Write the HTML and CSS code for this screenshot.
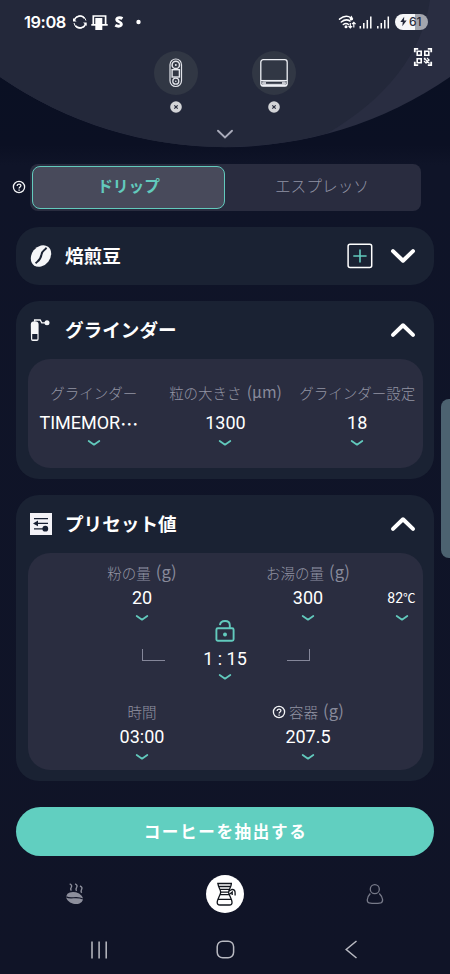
FILE: index.html
```html
<!DOCTYPE html>
<html lang="ja">
<head>
<meta charset="utf-8">
<title>ドリップ</title>
<link rel="stylesheet" href="styles.css">
</head>
<body>
<svg class="defs" width="0" height="0">
  <symbol id="chev" viewBox="0 0 14 8"><path d="M1.7 2 L7 5.7 L12.3 2" fill="none" stroke="#62cabd" stroke-width="1.8" stroke-linecap="round" stroke-linejoin="round"/></symbol>
  <symbol id="help" viewBox="0 0 14 14"><circle cx="7" cy="7" r="5.6" fill="none" stroke="#f3f4f6" stroke-width="1.3"/><path d="M5.1 5.9 C5.1 3.5 8.9 3.5 8.9 5.6 C8.9 7 7.1 7 7.1 8.4 M7.1 9.4 V10.7" fill="none" stroke="#f3f4f6" stroke-width="1.3"/></symbol>
  <symbol id="close" viewBox="0 0 12 12"><circle cx="6" cy="6" r="5.8" fill="#d3d4d7"/><path d="M4.3 4.3 L7.7 7.7 M7.7 4.3 L4.3 7.7" stroke="#282c3c" stroke-width="1.2"/></symbol>
  <symbol id="up" viewBox="0 0 26 16"><path d="M3 12.9 L13 3.3 L23 12.9" fill="none" stroke="#fff" stroke-width="4" stroke-linecap="round" stroke-linejoin="round"/></symbol>
</svg>
<header class="hero">
  <svg class="hero-bg" viewBox="0 0 450 150">
    <path d="M0 0 H450 V77 A396 396 0 0 1 0 77 Z" fill="#292d41"/>
    <path d="M0 0 H430 C422 54 386 99 327 133.5 A396 396 0 0 1 0 77 Z" fill="#23283a"/>
  </svg>
  <div class="status">
    <span class="clock">19:08</span>
    <svg width="76" height="18" viewBox="72 13 76 18">
      <g fill="none" stroke="#fff" stroke-width="1.6"><path d="M74.3 20 A6 6 0 0 1 84.5 18.2 M85.6 24 A6 6 0 0 1 75.5 25.9"/><path d="M76 17.5 A6 6 0 0 1 85.9 20.5 M84 26.6 A6 6 0 0 1 74 23" stroke-width="1"/></g>
      <path d="M73 18 v3.6 h3.6z M86.7 26 v-3.6 h-3.6z" fill="#fff"/>
      <path d="M93.3 24.8 V16 H105.6 V24.8 M91.3 24.9 H107.7" fill="none" stroke="#fff" stroke-width="1.7"/>
      <path d="M95.3 18 h7 v12 h-7z" fill="#fff"/>
      <path d="M122.5 18.6 C119.5 16.9 116.4 18 116.8 20 C117.1 21.9 121.4 21.7 121.4 24.1 C121.4 26.5 117.8 26.8 115.3 25.3" fill="none" stroke="#fff" stroke-width="2.9"/>
      <circle cx="138.5" cy="22" r="2.2" fill="#fff"/>
    </svg>
    <svg class="signals" width="52" height="18" viewBox="338 12 52 18">
      <g fill="none" stroke="#fff" stroke-width="1.5" stroke-linecap="round"><path d="M339.5 18.2 Q345.5 13.3 351 16.8 M341.3 21 Q345.8 17.3 350 20 M343.3 23.5 Q346 21.5 348.5 23.5"/></g>
      <circle cx="346" cy="25.8" r="1.5" fill="#fff"/><path d="M351.4 14.6 l1.8 3.2 a1.8 1.8 0 1 1-3.6 0z" fill="#fff"/>
      <path d="M350.3 22 v5 m-1.8-1.8 l1.8 1.8 1.8-1.8 M353.8 26.4 v-5 m-1.8 1.8 l1.8-1.8 1.8 1.8" fill="none" stroke="#fff" stroke-width="1.2"/>
      <path d="M360.3 25 V27.5 M363.8 22 V27.5 M367.3 19 V27.5 M377.8 25 V27.5 M381.3 22 V27.5 M384.8 19 V27.5" stroke="#fff" stroke-width="1.5"/>
      <path d="M370.8 15.5 V27.5 M388.3 15.5 V27.5" stroke="#fff" stroke-width="1.5"/>
    </svg>
    <div class="battery">
      <svg width="7" height="11" viewBox="0 0 8 11"><path d="M4.8 0 L0.4 6 H3.2 L2.6 11 L7.6 4.3 H4.6z" fill="#23283a"/></svg><span>61</span>
    </div>
  </div>
  <svg class="qr" width="20" height="20" viewBox="0 0 20 20" fill="none" stroke="#fff">
    <path d="M1.8 5.2 V1.8 H5.2 M14.8 1.8 H18.2 V5.2 M1.8 14.8 V18.2 H5.2 M14.8 18.2 H18.2 V14.8" stroke-width="1.8"/>
    <path d="M4.2 4.2 h4 v4 h-4z M11.8 4.2 h4 v4 h-4z M4.2 11.8 h4 v4 h-4z" stroke-width="1.6"/>
    <path d="M11 11 l5.5 5.5 M14 11 l2.5 2.5 M11 14 l2.5 2.5 M11 12.5 l1.5-1.5 M13 15.5 l3.2-3.2" stroke-width="1.1"/>
  </svg>
  <div class="devices">
    <div class="device">
      <div class="disc"><svg width="16" height="30" viewBox="0 0 16 30" fill="none" stroke="#e2e4ea" stroke-width="1.2"><rect x="2" y="1" width="11.5" height="27.5" rx="5.7"/><circle cx="7.8" cy="6.9" r="3.7" stroke-width="1.5"/><circle cx="7.8" cy="6.9" r="1" fill="#e2e4ea" stroke="none"/><rect x="4.1" y="11.7" width="7.3" height="7.3" stroke-width="1.4"/><circle cx="7.8" cy="23.2" r="3" stroke-width="1.3"/><circle cx="7.8" cy="23.2" r=".8" fill="#e2e4ea" stroke="none"/></svg></div>
      <svg width="12" height="12"><use href="#close"/></svg>
    </div>
    <div class="device">
      <div class="disc"><svg width="30" height="30" viewBox="0 0 30 30" fill="none" stroke="#eef0f5"><rect x="1.8" y="1.7" width="26.4" height="26.4" rx="2.5" stroke-width="1.3"/><path d="M2 22.5 H28" stroke-width="1.1"/><path d="M2 27.3 H28" stroke-width="1.8"/><rect x="3.3" y="23.3" width="23.4" height="3" rx="1.4" stroke-width=".8"/><path d="M4 25 h3 M23 25 h3" stroke-width="1.5"/></svg></div>
      <svg width="12" height="12"><use href="#close"/></svg>
    </div>
  </div>
  <svg class="pull" width="18" height="10" viewBox="0 0 18 10"><path d="M2 1.7 L9 8.5 L16 1.7" fill="none" stroke="#a9abba" stroke-width="1.9" stroke-linecap="round"/></svg>
</header>

<main>
  <div class="modes">
    <svg class="modes-help" width="14" height="14"><use href="#help"/></svg>
    <div class="tabs"><div class="tab active">ドリップ</div><div class="tab">エスプレッソ</div></div>
  </div>

  <section class="card">
    <div class="card-head">
      <svg class="head-icon" width="24" height="24" viewBox="0 0 24 24"><g transform="rotate(38 12 12)"><ellipse cx="12" cy="12" rx="9.2" ry="11.6" fill="#f5f6f8"/></g><path d="M17.4 3.6 C16.2 6.5 13.3 5.8 12.5 10.5 C11.8 15.6 9.3 16.7 6.6 19.4" fill="none" stroke="#1a2233" stroke-width="1.9"/></svg>
      <h2>焙煎豆</h2>
      <svg class="add" width="26" height="26" viewBox="0 0 26 26"><rect x="1.1" y="1.2" width="23.6" height="23.4" rx="2" fill="none" stroke="#fff" stroke-width="1.5"/><path d="M13 6.4 V19.6 M6.3 13 H19.6" stroke="#62cabd" stroke-width="1.6"/></svg>
      <svg class="fold down" width="26" height="16"><use href="#up"/></svg>
    </div>
  </section>

  <section class="card">
    <div class="card-head">
      <svg class="head-icon" width="24" height="24" viewBox="0 0 24 24"><path d="M1.8 6.2 Q1.8 3.3 5.8 3.3 Q9.6 3.3 9.6 6.2 V21 Q9.6 22.9 7.8 22.9 H3.8 Q2 22.9 2 21z" fill="#f5f6f8"/><path d="M3.2 16 h5.2 v5.4 h-5.2z" fill="#182033"/><path d="M5.6 3.5 V2 H11.2 L12.8 4.8 H19" fill="none" stroke="#f5f6f8" stroke-width="1.3"/><circle cx="18" cy="4.8" r="2.5" fill="#f5f6f8"/></svg>
      <h2>グラインダー</h2>
      <svg class="fold" width="26" height="16"><use href="#up"/></svg>
    </div>
    <div class="panel grinder">
      <div class="field"><span class="label">グラインダー</span><span class="value model">TIMEMOR<span class="dots">⋯</span></span><svg class="chev"><use href="#chev"/></svg></div>
      <div class="field"><span class="label">粒の大きさ <span class="unit">(μm)</span></span><span class="value">1300</span><svg class="chev"><use href="#chev"/></svg></div>
      <div class="field"><span class="label">グラインダー設定</span><span class="value">18</span><svg class="chev"><use href="#chev"/></svg></div>
    </div>
  </section>

  <section class="card">
    <div class="card-head">
      <svg class="head-icon" width="24" height="24" viewBox="0 0 24 24"><path d="M1 1 h22 v22 h-22z" fill="#f3f2f7"/><path d="M5 6.6 H19 M9 11.4 H19 M5 16.9 H14" stroke="#182033" stroke-width="1.3"/><path d="M4 11.4 L9 8.6 V14.2z" fill="#182033"/><circle cx="16.3" cy="16.7" r="2.9" fill="#182033"/></svg>
      <h2>プリセット値</h2>
      <svg class="fold" width="26" height="16"><use href="#up"/></svg>
    </div>
    <div class="panel preset">
      <div class="field c1"><span class="label">粉の量 <span class="unit">(g)</span></span><span class="value">20</span><svg class="chev"><use href="#chev"/></svg></div>
      <div class="field c3"><span class="label">お湯の量 <span class="unit">(g)</span></span><span class="value">300</span><svg class="chev"><use href="#chev"/></svg></div>
      <div class="field c5"><span class="label"></span><span class="value temp">82<span class="deg">℃</span></span><svg class="chev"><use href="#chev"/></svg></div>
      <div class="bracket c1 r2 left"></div>
      <div class="ratio c2 r2">
        <svg width="20" height="22" viewBox="0 0 20 22"><rect x="1.4" y="8.3" width="17.2" height="12.5" rx="1.5" fill="none" stroke="#62cabd" stroke-width="1.9"/><path d="M4.9 5.2 C5.6 -.2 14.6 -.5 14.8 5.2 V8" fill="none" stroke="#62cabd" stroke-width="1.9"/><circle cx="10" cy="14.5" r="2" fill="#62cabd"/></svg>
        <span class="value">1 : 15</span><svg class="chev"><use href="#chev"/></svg>
      </div>
      <div class="bracket c3 r2 right"></div>
      <div class="field c1 r3"><span class="label">時間</span><span class="value">03:00</span><svg class="chev"><use href="#chev"/></svg></div>
      <div class="field c3 r3"><span class="label"><svg class="label-help" width="14" height="14"><use href="#help"/></svg>容器 <span class="unit">(g)</span></span><span class="value">207.5</span><svg class="chev"><use href="#chev"/></svg></div>
    </div>
  </section>

  <button class="brew">コーヒーを抽出する</button>
</main>

<nav class="app-nav">
  <div><svg width="20" height="24" viewBox="0 0 20 24"><ellipse cx="9.6" cy="16" rx="8.5" ry="5.8" transform="rotate(14 9.6 16)" fill="#8d8f9c"/><path d="M1.2 14.7 C6 18 11 13.3 18 17.1" fill="none" stroke="#101427" stroke-width="1.1"/><path d="M4.7 1.8 q3 1.3 1.4 3.8 q-1 1.4 .2 3 M10.1 1.8 q3 1.3 1.4 3.8 q-1 1.4 0 3.2 M15 4 q3 1.3 1.4 3.8 q-.8 1.2 .2 3" fill="none" stroke="#8d8f9c" stroke-width="1.4"/></svg></div>
  <div><span class="nav-disc"><svg width="38" height="38" viewBox="0 0 38 38" fill="none" stroke="#11151c" stroke-width="1.3"><path d="M11.2 8.5 H26 M12 8.5 C12 13 15.5 15 14.6 18 C13.5 21.5 11.5 24 11.2 27 Q11 30 14 30 H23.4 Q26.3 30 26 27 C25.8 24 23.7 21.5 22.7 18 C22 15 25.2 13 25.4 8.5 M12.5 11.5 H25 M13.5 14.3 H24 M14.4 17.2 H23 M13.6 19.6 H23.5 M12 24.3 H25.3"/><path d="M23 16 L26 14.5 Q29.2 14.3 29.1 18 V20.5 M23.5 19.2 L26.2 17.1 V20"/></svg></span></div>
  <div><svg width="18" height="22" viewBox="0 0 18 22" fill="none" stroke="#777a89" stroke-width="1.3"><circle cx="8.8" cy="6.2" r="4.5"/><path d="M4.3 10.5 C0 15.2 1 19.4 3 19.8 Q9 21 14.8 19.8 C17.3 19 17.5 14.8 13.3 10.5"/></svg></div>
</nav>
<footer class="sys-nav">
  <svg width="20" height="20" viewBox="0 0 20 20"><path d="M2 1.5 V18.5 M9.1 1.5 V18.5 M16.2 1.5 V18.5" stroke="#b9bac2" stroke-width="1.5"/></svg>
  <svg width="20" height="20" viewBox="0 0 20 20"><rect x="1.2" y="1.2" width="16.4" height="16.6" rx="5.5" fill="none" stroke="#b9bac2" stroke-width="1.5"/></svg>
  <svg width="20" height="20" viewBox="0 0 20 20"><path d="M15.5 1 L5.2 9.5 L15.5 18" fill="none" stroke="#b9bac2" stroke-width="1.5"/></svg>
</footer>
<div class="edge-handle"></div>
</body>
</html>
```

FILE: styles.css
```css
* { box-sizing: border-box; }
body {
  margin: 0;
  width: 450px;
  height: 974px;
  overflow: hidden;
  position: relative;
  background: linear-gradient(#091023 0, #0b1023 145px, #0f1428 165px, #101427 100%);
  color: #fff;
  font-family: "Noto Sans CJK JP", sans-serif;
}
svg { display: block; flex: none; }
.defs { position: absolute; }

.hero { position: relative; height: 148px; display: flex; flex-direction: column; }
.hero-bg { position: absolute; inset: 0; width: 450px; height: 150px; }
.hero > * { z-index: 1; }
.hero > .hero-bg { z-index: 0; }
.status { display: flex; align-items: center; height: 43px; padding: 0 22px 0 24px; }
.clock { width: 48px; font: 600 16.4px/20px Inter, sans-serif; letter-spacing: -.4px; }
.status .signals { margin-left: auto; margin-right: 5px; }
.battery {
  display: flex; align-items: center; gap: 2px; width: 33px; height: 16px; padding-left: 5px;
  border-radius: 8px; background: linear-gradient(90deg, #f5f6f8 61%, #a3a5ad 61%);
  color: #292d3d; font: 500 12px/16px Inter, sans-serif; letter-spacing: -.1px;
}
.qr { position: absolute; top: 47px; left: 413px; }
.devices { display: flex; justify-content: center; gap: 54px; margin-top: 8px; }
.device { width: 44px; display: flex; flex-direction: column; align-items: center; gap: 6px; }
.disc { width: 44px; height: 44px; border-radius: 50%; background: #313744; display: flex; align-items: center; justify-content: center; }
.pull { margin: 16px auto 0; }

main { padding: 16px 16px 0; }
.modes { display: flex; align-items: center; gap: 4px; margin-left: -4px; height: 47px; }
.modes-help { margin-bottom: 1px; }
.tabs { flex: none; width: 391px; height: 47px; padding: 2px; border-radius: 8px; background: #292c3f; display: flex; }
.tab { flex: 1; height: 43px; line-height: 39px; text-align: center; font-size: 15.7px; font-weight: 300; color: #9092a4; }
.tab.active { flex: none; width: 193px; line-height: 37px; background: #484a5b; border: 1px solid #62cabd; border-radius: 8px; font-weight: 700; color: #62cabd; }

.card { margin-top: 16px; padding: 0 11px 11px 12px; border-radius: 23px; background: #1a2233; }
.modes + .card { padding-bottom: 0; }
.card-head { height: 58px; display: flex; align-items: center; padding-right: 7px; }
.head-icon { margin-left: 1px; margin-right: 12px; }
h2 { margin: 0; padding-bottom: 2px; font-size: 18.6px; line-height: 28px; font-weight: 700; }
.fold { margin-left: auto; }
.add + .fold { margin-left: 17px; }
.add { margin-left: auto; }
.down { transform: rotate(180deg); }
.panel { border-radius: 22px; background: #2a2d40; display: grid; }
.field, .ratio { display: flex; flex-direction: column; align-items: center; white-space: nowrap; }
.label { flex: none; display: flex; align-items: center; gap: 5px; height: 20px; font-size: 14.5px; line-height: 20px; font-weight: 300; color: #9294a3; }
.unit { font-size: 16.6px; font-weight: 400; color: #888a9b; position: relative; top: -2px; }
.grinder .unit { font-size: 15.8px; top: -1px; }
.label-help { margin-right: -2px; }
.value { flex: none; height: 24px; margin-top: 2px; font: 450 18px/24px Roboto, "Noto Sans CJK JP", sans-serif; }
.model { display: flex; margin-right: 10px; }
.dots { font-family: "Noto Sans CJK JP", sans-serif; }
.chev { width: 14px; height: 8px; margin-top: 4px; }

.grinder { height: 109px; padding-top: 24px; grid-template-columns: repeat(3, 1fr); }
.grinder .value { margin-top: 8px; }
.preset { height: 217px; padding: 10px 0 0 72.5px; grid-template-columns: 83px 83px 83px 30px 44px; grid-template-rows: 56px 83px 1fr; }
.preset .field .value { margin-top: 3px; }
.preset .field { margin-left: -1px; margin-right: -1px; }
.c1 { grid-column: 1; }
.c2 { grid-column: 2; }
.c3 { grid-column: 3; }
.c5 { grid-column: 5; }
.r2 { grid-row: 2; }
.r3 { grid-row: 3; }
.temp { display: flex; font-size: 14px; }
.deg { font-family: "Noto Sans CJK JP", sans-serif; font-weight: 400; font-size: 12.5px; }
.ratio { padding-top: 1px; }
.ratio .value { margin-top: 5px; }
.ratio .chev { margin-top: 2px; }
.bracket { width: 23px; height: 12px; margin-top: 30px; border-bottom: 1px solid #85879a; }
.left { margin-left: 41px; border-left: 1px solid #85879a; }
.right { margin-left: 20px; border-right: 1px solid #85879a; }

.brew { display: block; width: 418px; height: 49px; margin-top: 26px; padding: 0 0 1px 1px; border: 0; border-radius: 25px; background: #61cfc0; color: #fff; font: 700 16.6px/24px "Noto Sans CJK JP", sans-serif; letter-spacing: 1.6px; }

.app-nav { display: grid; grid-template-columns: repeat(3, 1fr); height: 76px; align-items: center; justify-items: center; }
.nav-disc { display: block; width: 38px; height: 38px; border-radius: 50%; background: #fff; }
.sys-nav { display: flex; justify-content: space-between; padding: 8px 89px 0 90px; }
.edge-handle { position: absolute; left: 441px; top: 399px; width: 18px; height: 159px; border-radius: 8px; background: #4c6270; }
```
